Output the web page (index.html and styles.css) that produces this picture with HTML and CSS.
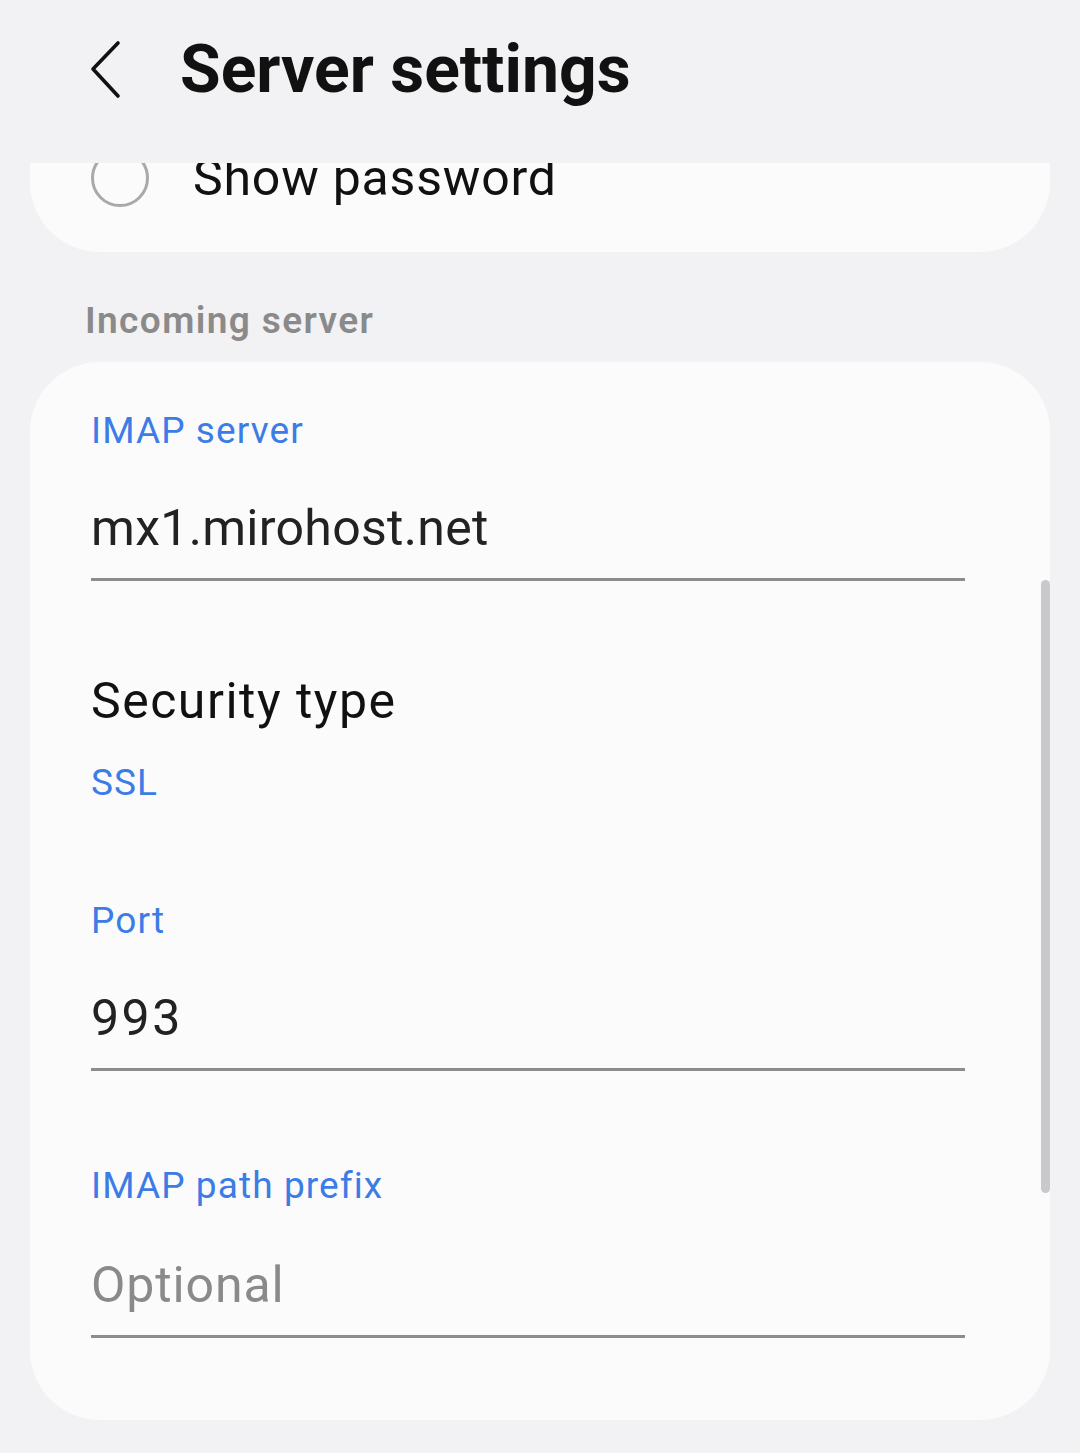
FILE: index.html
```html
<!DOCTYPE html>
<html lang="en">
<head>
  <meta charset="UTF-8">
  <meta name="viewport" content="width=device-width, initial-scale=1.0">
  <title>Server settings</title>
  <link rel="stylesheet" href="styles.css">
</head>
<body>
  <header class="app-bar">
    <span class="back-btn">
      <svg width="36" height="60" viewBox="0 0 36 60">
        <path d="M30 3 L5 29 L30 56" fill="none" stroke="#111" stroke-width="3.6" stroke-linecap="round" stroke-linejoin="round"/>
      </svg>
    </span>
    <h1 class="title">Server settings</h1>
  </header>

  <div class="scroller">
    <!-- card scrolled partly under the header -->
    <div class="card card-top">
      <div class="check-row">
        <span class="radio"></span>
        <span class="check-label">Show password</span>
      </div>
    </div>

    <div class="section-title">Incoming server</div>

    <div class="card card-fields">
      <div class="field-label">IMAP server</div>
      <div class="field-input">mx1.mirohost.net</div>

      <div class="pref-title">Security type</div>
      <div class="pref-value">SSL</div>

      <div class="field-label gap-top">Port</div>
      <div class="field-input digits">993</div>

      <div class="field-label gap-top last">IMAP path prefix</div>
      <div class="field-input placeholder">Optional</div>

      <div class="scrollbar"></div>
    </div>
  </div>
</body>
</html>
```

FILE: styles.css
```css
body {
  margin: 0;
  background-color: #f2f2f4;
  font-family: Roboto, "Noto Sans", sans-serif;
  color: #111;
  height: 1453px;
  overflow: hidden;
}

.app-bar {
  height: 163px;
  box-sizing: border-box;
  display: flex;
  align-items: flex-start;
  padding-left: 88px;
}

.back-btn {
  margin-top: 40px;
  width: 36px;
  height: 60px;
  display: flex;
}

.title {
  margin: 30px 0 0 56px;
  font-size: 66px;
  line-height: 80px;
  font-weight: 700;
  letter-spacing: 0;
}

.scroller {
  height: 1290px;
  overflow: hidden;
}

.card {
  background-color: #fbfbfb;
  margin: 0 30px;
  position: relative;
}

.card-top {
  margin-top: -35px;
  padding: 0 0 24px 61px;
  border-radius: 0 0 70px 70px;
}

.check-row {
  height: 100px;
  display: flex;
  align-items: center;
}

.radio {
  width: 52px;
  height: 52px;
  border: 3px solid #a9a9a9;
  border-radius: 50%;
}

.check-label {
  margin-left: 44px;
  font-size: 50px;
  line-height: 100px;
  letter-spacing: 0.8px;
  color: #111;
}

.section-title {
  margin: 45px 0 17px 85px;
  font-size: 37px;
  line-height: 48px;
  font-weight: 600;
  letter-spacing: 1.4px;
  color: #8a8a8a;
}

.card-fields {
  border-radius: 70px;
  padding: 45px 85px 80px 61px;
  height: 1058px;
  box-sizing: border-box;
}

.field-label {
  font-size: 37px;
  line-height: 48px;
  letter-spacing: 1.1px;
  color: #3b7ce6;
}

.gap-top {
  margin-top: 90px;
}

.gap-top.last {
  margin-top: 91px;
}

.field-input {
  margin-top: 38px;
  font-size: 50px;
  line-height: 70px;
  letter-spacing: 0.3px;
  color: #222;
  padding-bottom: 15px;
  border-bottom: 3px solid #8c8c8c;
}

.field-input.digits {
  letter-spacing: 2.5px;
}

.last + .field-input {
  margin-top: 40px;
}

.placeholder {
  color: #8a8a8a;
  letter-spacing: 0.9px;
}

.pref-title {
  margin-top: 85px;
  font-size: 50px;
  line-height: 70px;
  letter-spacing: 1.5px;
  color: #111;
}

.pref-value {
  margin-top: 23px;
  font-size: 37px;
  line-height: 48px;
  letter-spacing: 1px;
  color: #3b7ce6;
}

.scrollbar {
  position: absolute;
  right: 0;
  top: 218px;
  width: 9px;
  height: 613px;
  border-radius: 5px;
  background-color: #c9c9cb;
}
```
